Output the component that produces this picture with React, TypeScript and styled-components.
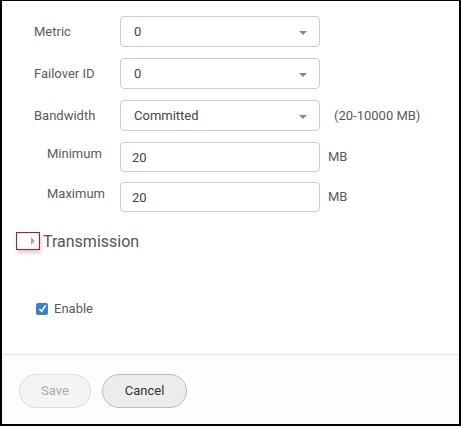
import React from 'react';
import styled, { createGlobalStyle } from 'styled-components';

const GlobalStyle = createGlobalStyle`
    html, body {
        margin: 0;
        padding: 0;
        background: #fff;
    }
    body {
        font-family: Roboto, "Liberation Sans", sans-serif;
        font-size: 13px;
        color: #5a5a5a;
    }
`;

const Frame = styled.div`
    width: 461px;
    height: 426px;
    box-sizing: border-box;
    border-top: 1px solid #000;
    border-left: 2px solid #000;
    border-right: 2px solid #000;
    border-bottom: 2px solid #000;
    display: flex;
    flex-direction: column;
    background: #fff;
`;

const Body = styled.div`
    height: 354px;
    box-sizing: border-box;
    padding: 15px 0 0 32px;
    border-bottom: 1px solid #e3e3e3;
`;

const Row = styled.div<{ $indent?: boolean; $gap?: number }>`
    display: flex;
    align-items: center;
    height: 31px;
    margin-bottom: ${p => p.$gap ?? 11}px;
    padding-left: ${p => (p.$indent ? 13 : 0)}px;
`;

const Label = styled.div<{ $indent?: boolean; $offset?: number }>`
    width: ${p => (p.$indent ? 73 : 86)}px;
    color: #5a5a5a;
    margin-top: ${p => p.$offset ?? 0}px;
`;

const Select = styled.div`
    width: 200px;
    height: 31px;
    box-sizing: border-box;
    border: 1px solid #ccc;
    border-radius: 4px;
    display: flex;
    align-items: center;
    justify-content: space-between;
    padding: 0 12px 0 13px;
    color: #444;
`;

const Caret = styled.span`
    width: 0;
    height: 0;
    border-left: 4px solid transparent;
    border-right: 4px solid transparent;
    border-top: 4px solid #888;
    margin-top: 2px;
`;

const Input = styled.div`
    width: 200px;
    height: 30px;
    box-sizing: border-box;
    border: 1px solid #ccc;
    border-radius: 4px;
    display: flex;
    align-items: center;
    padding: 2px 12px 0 11px;
    color: #444;
    font-size: 13px;
`;

const Hint = styled.span<{ $left: number }>`
    margin-left: ${p => p.$left}px;
    color: #5a5a5a;
`;

const Section = styled.div`
    display: flex;
    align-items: center;
    margin: 18px 0 0 -18px;
    height: 22px;
`;

const Toggle = styled.div`
    width: 24px;
    height: 18px;
    box-sizing: border-box;
    border: 1px solid #c8102e;
    display: flex;
    align-items: center;
    justify-content: flex-end;
    padding-right: 4px;
    box-shadow: 1px 3px 4px rgba(0, 0, 0, 0.18);
`;

const Tri = styled.span`
    width: 0;
    height: 0;
    border-top: 4px solid transparent;
    border-bottom: 4px solid transparent;
    border-left: 4px solid #aaa;
`;

const SectionTitle = styled.span`
    font-size: 16px;
    color: #555;
    margin-left: 3px;
`;

const CheckRow = styled.label`
    display: flex;
    align-items: center;
    margin: 49px 0 0 2px;
    color: #5a5a5a;
`;

const Box = styled.span`
    width: 12px;
    height: 12px;
    border-radius: 2px;
    background: #3b7fcf;
    display: flex;
    align-items: center;
    justify-content: center;
    margin-right: 6px;
`;

const Footer = styled.div`
    flex: 1;
    display: flex;
    align-items: flex-start;
    gap: 11px;
    padding: 19px 0 0 17px;
    background: #fdfdfd;
`;

const Button = styled.button<{ $disabled?: boolean }>`
    height: 34px;
    padding: 0 ${p => (p.$disabled ? 21 : 22)}px 1px;
    border-radius: 17px;
    font-family: Roboto, "Liberation Sans", sans-serif;
    font-size: 13px;
    border: 1px solid ${p => (p.$disabled ? '#dcdcdc' : '#bbb')};
    background: ${p => (p.$disabled ? '#f4f4f4' : '#ececec')};
    color: ${p => (p.$disabled ? '#aaa' : '#333')};
    cursor: ${p => (p.$disabled ? 'default' : 'pointer')};
`;

export default function App() {
    return (
        <>
            <GlobalStyle />
            <Frame>
                <Body>
                    <Row>
                        <Label>Metric</Label>
                        <Select>0<Caret /></Select>
                    </Row>
                    <Row>
                        <Label>Failover ID</Label>
                        <Select>0<Caret /></Select>
                    </Row>
                    <Row $gap={10}>
                        <Label>Bandwidth</Label>
                        <Select>Committed<Caret /></Select>
                        <Hint $left={14}>(20-10000 MB)</Hint>
                    </Row>
                    <Row $indent $gap={9}>
                        <Label $indent $offset={-6}>Minimum</Label>
                        <Input>20</Input>
                        <Hint $left={8}>MB</Hint>
                    </Row>
                    <Row $indent $gap={0}>
                        <Label $indent $offset={-6}>Maximum</Label>
                        <Input>20</Input>
                        <Hint $left={8}>MB</Hint>
                    </Row>
                    <Section>
                        <Toggle><Tri /></Toggle>
                        <SectionTitle>Transmission</SectionTitle>
                    </Section>
                    <CheckRow>
                        <Box>
                            <svg width="9" height="9" viewBox="0 0 10 10">
                                <path d="M1.5 5.5 L4 8 L8.5 1.5" stroke="#fff" strokeWidth="1.8" fill="none" />
                            </svg>
                        </Box>
                        Enable
                    </CheckRow>
                </Body>
                <Footer>
                    <Button $disabled>Save</Button>
                    <Button>Cancel</Button>
                </Footer>
            </Frame>
        </>
    );
}
